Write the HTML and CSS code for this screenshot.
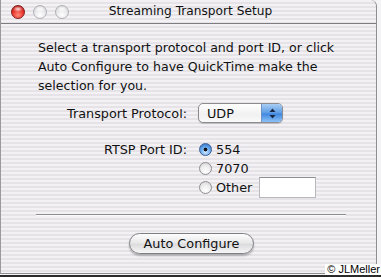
FILE: index.html
```html
<!DOCTYPE html>
<html>
<head>
<meta charset="utf-8">
<link rel="stylesheet" href="styles.css">
</head>
<body>
<div class="window">
  <div class="titlebar">
    <div class="lights">
      <span class="light red"></span>
      <span class="light gray"></span>
      <span class="light gray"></span>
    </div>
    <div class="title">Streaming Transport Setup</div>
  </div>
  <div class="content">
    <p class="intro">Select a transport protocol and port ID, or click<br>Auto Configure to have QuickTime make the<br>selection for you.</p>
    <div class="row proto">
      <span class="label">Transport Protocol:</span>
      <div class="popup">
        <span class="popup-text">UDP</span>
        <span class="popup-arrows">
          <svg width="7" height="11" viewBox="0 0 7 11"><path d="M3.5 0.5 L6.5 4 L0.5 4 Z M3.5 10.5 L6.5 7 L0.5 7 Z" fill="#1b2a44"/></svg>
        </span>
      </div>
    </div>
    <div class="row port">
      <span class="label">RTSP Port ID:</span>
      <div class="radios">
        <div class="radio"><span class="dot on"></span><span>554</span></div>
        <div class="radio"><span class="dot"></span><span>7070</span></div>
        <div class="radio"><span class="dot"></span><span>Other</span><span class="field"></span></div>
      </div>
    </div>
    <div class="sep"></div>
    <div class="btnrow"><span class="aqua-btn">Auto Configure</span></div>
  </div>
</div>
<div class="credit">© JLMeller</div>
<div class="bottombar"></div>
</body>
</html>
```
FILE: styles.css
```css
html, body {
  margin: 0;
  padding: 0;
}
body {
  width: 381px;
  height: 277px;
  overflow: hidden;
  position: relative;
  background: #f4f3f5;
  font-family: "DejaVu Sans", sans-serif;
  color: #111;
}
.window {
  width: 377px;
  height: 274px;
  border-left: 1px solid #9a999c;
  border-right: 1px solid #8e8d90;
  border-bottom: 1px solid #8e8d90;
  border-top-right-radius: 6px;
  box-sizing: border-box;
  background: repeating-linear-gradient(to bottom, #f3f1f4 0px, #f3f1f4 2px, #e5e3e8 2px, #e5e3e8 4px);
  display: flex;
  flex-direction: column;
}
.titlebar {
  height: 23px;
  border-bottom: 1px solid #7d7c80;
  display: flex;
  align-items: center;
  position: relative;
}
.lights {
  display: flex;
  gap: 8px;
  padding-left: 10px;
}
.light {
  width: 14px;
  height: 14px;
  border-radius: 50%;
  box-sizing: border-box;
}
.light.red {
  background:
    radial-gradient(ellipse 5px 3px at 50% 25%, rgba(255,255,255,0.85), rgba(255,255,255,0) 100%),
    radial-gradient(circle at 50% 75%, #ff8a7a 0%, #e8372f 50%, #a3100e 100%);
  border: 1px solid #85201c;
}
.light.gray {
  background:
    radial-gradient(ellipse 5px 3px at 50% 25%, rgba(255,255,255,0.9), rgba(255,255,255,0) 100%),
    radial-gradient(circle at 50% 75%, #ffffff 0%, #e6e5e8 55%, #cbcace 100%);
  border: 1px solid #b2b1b6;
}
.title {
  position: absolute;
  left: 0;
  right: 0;
  top: 4px;
  text-align: center;
  font-size: 12.2px;
  padding-left: 4px;
  line-height: 15px;
}
.content {
  display: flex;
  flex-direction: column;
}
.intro {
  margin: 14px 0 0 37px;
  font-size: 12.6px;
  line-height: 19px;
}
.row {
  display: grid;
  grid-template-columns: 186px auto;
  column-gap: 11px;
  font-size: 12.8px;
}
.label {
  text-align: right;
}
.proto {
  margin-top: 8px;
  align-items: center;
}
.popup {
  width: 85px;
  height: 20px;
  box-sizing: border-box;
  border: 1px solid #8c8b90;
  border-radius: 5px;
  background: linear-gradient(#ffffff, #f1f1f1 60%, #fafafa);
  box-shadow: 0 1px 1px rgba(0,0,0,0.18);
  display: flex;
  align-items: center;
  overflow: hidden;
}
.popup-text {
  flex: 1;
  padding-left: 8px;
}
.popup-arrows {
  width: 20px;
  align-self: stretch;
  background: linear-gradient(#a9cdf4, #5b9ce6 50%, #3f86df 55%, #8cc2f7);
  border-left: 1px solid #6f94c4;
  display: flex;
  align-items: center;
  justify-content: center;
}
.port {
  margin-top: 17px;
  align-items: start;
}
.port .label {
  line-height: 19px;
}
.radios {
  display: flex;
  flex-direction: column;
}
.radio {
  height: 19px;
  display: flex;
  align-items: center;
  gap: 4px;
}
.dot {
  width: 13px;
  height: 13px;
  margin-left: 1px;
  border-radius: 50%;
  box-sizing: border-box;
  border: 1px solid #8f8e93;
  background: radial-gradient(circle at 50% 75%, #ffffff 0%, #eeeeee 50%, #cfcfd3 100%);
}
.dot.on {
  border-color: #3a5f94;
  background:
    radial-gradient(circle at 50% 50%, #111 0, #111 1.6px, transparent 2.2px),
    radial-gradient(circle at 50% 75%, #cde6ff 0%, #5fa2ea 55%, #2a66b8 100%);
}
.field {
  width: 57px;
  height: 21px;
  box-sizing: border-box;
  background: #fff;
  border: 1px solid #b9b8bc;
  border-top-color: #8d8c90;
  margin-left: 3px;
}
.sep {
  margin: 17px 0 0 35px;
  width: 310px;
  height: 1px;
  background: #8d8c91;
  box-shadow: 0 1px 0 #fafafa;
}
.btnrow {
  margin-top: 18px;
  padding-left: 128px;
  display: flex;
}
.aqua-btn {
  width: 125px;
  height: 21px;
  box-sizing: border-box;
  border: 1px solid #7f7e83;
  border-radius: 11px;
  background: linear-gradient(#fdfdfd, #e9e9ea 45%, #dcdcde 55%, #f6f6f7);
  box-shadow: 0 2px 2px rgba(0,0,0,0.25);
  font-size: 12.8px;
  text-align: center;
  line-height: 19px;
}
.credit {
  position: absolute;
  right: 0;
  top: 264px;
  font-family: "Liberation Sans", sans-serif;
  font-size: 11px;
  line-height: 11px;
  color: #000;
  background: #fff;
  padding: 0 1px 0 2px;
}
.bottombar {
  position: absolute;
  left: 0;
  right: 0;
  top: 275px;
  height: 2px;
  background: #2a2a2a;
}
```
